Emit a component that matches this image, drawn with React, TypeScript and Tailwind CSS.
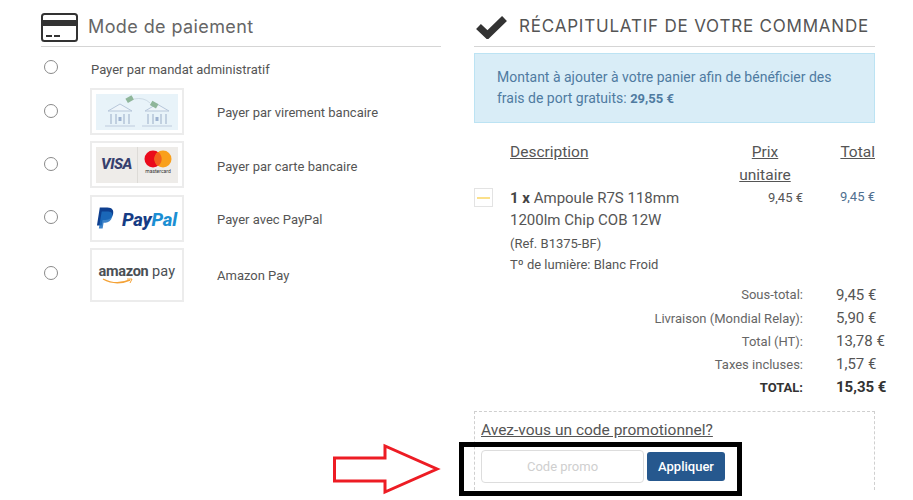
import React from "react";

const roboto = "font-['Roboto',sans-serif]";
const heading = "font-['Inter',sans-serif]";

function Radio() {
  return <span className="block w-[14px] h-[14px] rounded-full border border-[#8a8a8a] bg-white" />;
}

function Bank({ x }: { x: number }) {
  return (
    <g transform={`translate(${x} 0)`} fill="none" stroke="#b7c7da" strokeWidth="1">
      <path d="M0 17 L12 10 L24 17 Z" fill="#eef5fa" />
      <path d="M3 20 V30 M8 20 V30 M16 20 V30 M21 20 V30" strokeWidth="1.6" />
      <path d="M-3 32 H27" strokeWidth="1.6" stroke="#cddaE8" />
      <rect x="10.5" y="23" width="3" height="4" fill="#9db2d0" stroke="none" />
    </g>
  );
}

function LogoBox({ className, children }: { className: string; children: React.ReactNode }) {
  return (
    <div className={`w-[94px] shrink-0 border-2 border-[#ececec] flex items-center justify-center bg-white ${className}`}>
      {children}
    </div>
  );
}

function PayRow({ logo, label, rowClass, radioClass, labelClass }: { logo: React.ReactNode; label: string; rowClass: string; radioClass: string; labelClass: string }) {
  return (
    <div className={`flex items-start ${rowClass}`}>
      <div className={`w-[49px] pl-[3px] ${radioClass}`}>
        <Radio />
      </div>
      {logo}
      <span className={`ml-[33px] text-[13px] text-[#555] ${labelClass}`}>{label}</span>
    </div>
  );
}

function TotalRow({ label, value, bold, h }: { label: string; value: string; bold?: boolean; h: string }) {
  return (
    <div className={`flex items-center w-[420px] ${h}`}>
      <span className={`w-[329px] shrink-0 text-right text-[13px] ${bold ? "font-bold text-[#333]" : "text-[#666]"}`}>{label}</span>
      <span className={`ml-[33px] text-[15px] whitespace-nowrap ${bold ? "font-bold text-[#333]" : "text-[#555]"}`}>{value}</span>
    </div>
  );
}

export default function App() {
  return (
    <div className={`relative w-[913px] h-[500px] overflow-hidden bg-white flex pl-[41px] pt-[8px] ${roboto}`}>
      {/* left column */}
      <div className="w-[400px] shrink-0">
        <div className="h-[39px] flex items-center border-b border-[#d5d5d5] pb-[1px]">
          <svg width="37" height="29" viewBox="0 0 37 29" className="mt-[1px]">
            <rect x="1" y="1" width="35" height="27" rx="2.5" fill="#fff" stroke="#333" strokeWidth="2" />
            <rect x="2" y="7" width="33" height="6" fill="#333" />
            <rect x="5" y="22" width="6" height="2" fill="#333" />
            <rect x="13" y="22" width="6" height="2" fill="#333" />
          </svg>
          <span className={`ml-[10px] text-[18px] text-[#666] tracking-[0.4px] ${heading}`}>Mode de paiement</span>
        </div>
        <div className="pt-[11px]">
          <PayRow
            rowClass="h-[30px]"
            radioClass="pt-[2px]"
            labelClass="hidden"
            label=""
            logo={<span className="block text-[13px] text-[#555] pt-[2px] pl-[1px]">Payer par mandat administratif</span>}
          />
          <PayRow
            rowClass="h-[53px]"
            radioClass="pt-[16px]"
            labelClass="pt-[15px]"
            label="Payer par virement bancaire"
            logo={
              <LogoBox className="h-[47px]">
                <svg width="82" height="36" viewBox="0 0 82 36">
                  <rect width="82" height="36" fill="#e8f3f9" />
                  <Bank x={12} />
                  <Bank x={49} />
                  <rect x="30" y="3" width="7" height="5" fill="#8fb69a" transform="rotate(-30 33 5)" />
                  <rect x="55" y="8" width="7" height="5" fill="#8fb69a" transform="rotate(30 58 10)" />
                  <path d="M38 5 Q48 3 54 9" fill="none" stroke="#c5d3de" strokeWidth="0.8" />
                </svg>
              </LogoBox>
            }
          />
          <PayRow
            rowClass="h-[54px]"
            radioClass="pt-[16px]"
            labelClass="pt-[16px]"
            label="Payer par carte bancaire"
            logo={
              <LogoBox className="h-[47px]">
                <div className="relative w-[82px] h-[36px] bg-[#eeece9] flex">
                  <span className="w-[42px] border-r border-[#dddbd7] flex items-center justify-center text-[15px] font-extrabold italic text-[#36406e] tracking-[-0.5px]">VISA</span>
                  <div className="flex-1 flex flex-col items-center pt-[3px]">
                    <svg width="28" height="18" viewBox="0 0 28 18">
                      <circle cx="9" cy="9" r="8.5" fill="#ea0a1b" />
                      <circle cx="19" cy="9" r="8.5" fill="#f9a01b" />
                      <path d="M14 2 A8.5 8.5 0 0 1 14 16 A8.5 8.5 0 0 1 14 2Z" fill="#f2601d" />
                    </svg>
                    <span className="text-[5px] leading-[7px] text-[#333]">mastercard</span>
                  </div>
                </div>
              </LogoBox>
            }
          />
          <PayRow
            rowClass="h-[53px]"
            radioClass="pt-[15px]"
            labelClass="pt-[15px]"
            label="Payer avec PayPal"
            logo={
              <LogoBox className="h-[47px]">
                <div className="flex items-center gap-[8px] w-[82px]">
                  <svg width="18" height="23" viewBox="0 0 19 23">
                    <path d="M4 0 H12 C17 0 19 3 18 7 C17 11 14 13 10 13 H7 L6 19 H1 Z" fill="#0e3f8f" />
                    <path d="M6 4 H13 C17 4 18 7 17 10 C16 14 13 16 10 16 H8 L7 22 H3 Z" fill="#1c6fc0" opacity="0.85" />
                  </svg>
                  <span className="text-[18.5px] font-extrabold italic tracking-[-0.2px] leading-none text-[#153c85] pt-[3px]">
                    Pay<span className="text-[#1b8fd3]">Pal</span>
                  </span>
                </div>
              </LogoBox>
            }
          />
          <PayRow
            rowClass="h-[54px]"
            radioClass="pt-[18px]"
            labelClass="pt-[18px]"
            label="Amazon Pay"
            logo={
              <LogoBox className="h-[54px]">
                <div className="relative flex flex-col items-center pb-[6px]">
                  <span className="text-[14.5px] leading-[16px] text-[#4a4f55] whitespace-nowrap">
                    <span className="font-bold tracking-[-0.3px]">amazon</span> <span className="tracking-[0.2px]">pay</span>
                  </span>
                  <svg width="34" height="7" viewBox="0 0 34 7" className="absolute left-[3px] top-[14px]">
                    <path d="M1 1 Q14 8 28 2" fill="none" stroke="#f4a236" strokeWidth="1.4" />
                    <path d="M25 1 L30 1 L28 5" fill="none" stroke="#f4a236" strokeWidth="1" />
                  </svg>
                </div>
              </LogoBox>
            }
          />
        </div>
      </div>

      {/* right column */}
      <div className="ml-[33px] w-[401px] shrink-0">
        <div className="h-[39px] flex items-center border-b border-[#d5d5d5]">
          <svg width="31" height="24" viewBox="0 0 31 24" className="ml-[2px]">
            <path d="M2.5 11.5 L11.5 20 L28.5 3.5" fill="none" stroke="#333" strokeWidth="7" strokeLinejoin="miter" />
          </svg>
          <span className={`ml-[12px] text-[17px] text-[#555] tracking-[0.8px] whitespace-nowrap ${heading}`}>RÉCAPITULATIF DE VOTRE COMMANDE</span>
        </div>
        <div className="mt-[6px] h-[70px] bg-[#d9edf7] border border-[#bce3f3] pl-[22px] pt-[13px] text-[14px] leading-[21px] text-[#4f7ba1]">
          Montant à ajouter à votre panier afin de bénéficier des
          <br />
          frais de port gratuits: <b className="font-bold text-[13px]">29,55 €</b>
        </div>

        <div className="flex mt-[18px] text-[15.5px] leading-[23px] text-[#555] underline">
          <span className="ml-[36px] w-[225px]">Description</span>
          <span className="w-[60px] text-center">Prix unitaire</span>
          <span className="flex-1 text-right">Total</span>
        </div>

        <div className="flex">
          <div className="w-[19px] h-[19px] mt-[1px] border border-[#e3e3e3] flex items-center justify-center shrink-0">
            <span className="block w-[13px] h-[2px] bg-[#fbe08a]" />
          </div>
          <div className="ml-[17px] w-[207px] shrink-0 text-[#555]">
            <div className="text-[15px] leading-[22px]">
              <b className="font-bold text-[#444]">1 x</b> Ampoule R7S 118mm 1200lm Chip COB 12W
            </div>
            <div className="text-[13px] leading-[21px] mt-[2px]">(Ref. B1375-BF)</div>
            <div className="text-[13px] leading-[21px]">Tº de lumière: Blanc Froid</div>
          </div>
          <span className="w-[86px] text-right text-[13px] leading-[22px] text-[#555]">9,45 €</span>
          <span className="flex-1 text-right text-[13px] leading-[20px] text-[#4f6f8f]">9,45 €</span>
        </div>

        <div className="mt-[8px]">
          <TotalRow h="h-[24px]" label="Sous-total:" value="9,45 €" />
          <TotalRow h="h-[23px]" label="Livraison (Mondial Relay):" value="5,90 €" />
          <TotalRow h="h-[23px]" label="Total (HT):" value="13,78 €" />
          <TotalRow h="h-[23px]" label="Taxes incluses:" value="1,57 €" />
          <TotalRow h="h-[23px]" bold label="TOTAL:" value="15,35 €" />
        </div>

        <div className="mt-[12px] h-[79px] border border-b-0 border-dashed border-[#cfcfcf] px-[6px] pt-[8px]">
          <div className="text-[15.5px] leading-[20px] text-[#555] underline">Avez-vous un code promotionnel?</div>
          <div className="flex items-center mt-[10px]">
            <div className="w-[163px] h-[33px] border border-[#ddd] rounded-[4px] flex items-center justify-center text-[13px] text-[#cfcfcf]">Code promo</div>
            <button className="ml-[3px] w-[78px] h-[29px] bg-[#26588e] rounded-[3px] text-white text-[13px] font-medium">Appliquer</button>
          </div>
        </div>
      </div>

      {/* annotations */}
      <svg width="110" height="54" viewBox="0 0 110 54" className="absolute left-[333px] top-[443px]">
        <path d="M1.5 15 H52 V3 L104 26 L52 49 V38 H1.5 Z" fill="#fff" stroke="#ed1c24" strokeWidth="3" />
      </svg>
      <div className="absolute left-[459px] top-[442px] w-[283px] h-[54px] border-[5px] border-black" />
    </div>
  );
}
